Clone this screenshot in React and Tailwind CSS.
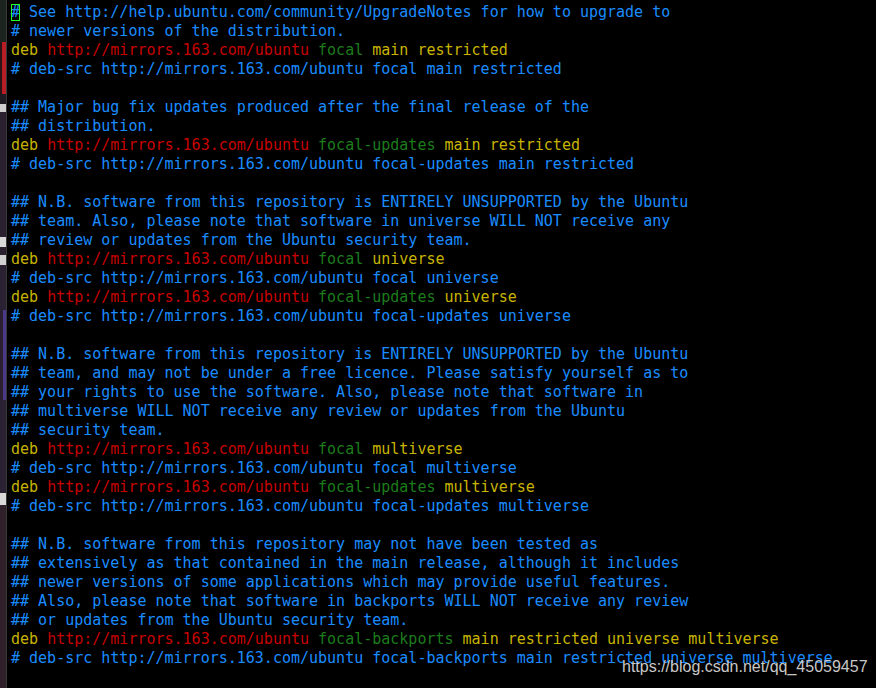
import React from "react";

const B = "text-[#1a8cff]";
const R = "text-[#c80000]";
const G = "text-[#1c7c1c]";
const Y = "text-[#c8b400]";

const deb = (suite, comps) => [
  [Y, "deb "],
  [R, "http://mirrors.163.com/ubuntu"],
  [B, " "],
  [G, suite],
  [B, " "],
  [Y, comps],
];
const c = (t) => [[B, t]];

const lines = [
  "CURSOR",
  c("# newer versions of the distribution."),
  deb("focal", "main restricted"),
  c("# deb-src http://mirrors.163.com/ubuntu focal main restricted"),
  c(""),
  c("## Major bug fix updates produced after the final release of the"),
  c("## distribution."),
  deb("focal-updates", "main restricted"),
  c("# deb-src http://mirrors.163.com/ubuntu focal-updates main restricted"),
  c(""),
  c("## N.B. software from this repository is ENTIRELY UNSUPPORTED by the Ubuntu"),
  c("## team. Also, please note that software in universe WILL NOT receive any"),
  c("## review or updates from the Ubuntu security team."),
  deb("focal", "universe"),
  c("# deb-src http://mirrors.163.com/ubuntu focal universe"),
  deb("focal-updates", "universe"),
  c("# deb-src http://mirrors.163.com/ubuntu focal-updates universe"),
  c(""),
  c("## N.B. software from this repository is ENTIRELY UNSUPPORTED by the Ubuntu"),
  c("## team, and may not be under a free licence. Please satisfy yourself as to"),
  c("## your rights to use the software. Also, please note that software in"),
  c("## multiverse WILL NOT receive any review or updates from the Ubuntu"),
  c("## security team."),
  deb("focal", "multiverse"),
  c("# deb-src http://mirrors.163.com/ubuntu focal multiverse"),
  deb("focal-updates", "multiverse"),
  c("# deb-src http://mirrors.163.com/ubuntu focal-updates multiverse"),
  c(""),
  c("## N.B. software from this repository may not have been tested as"),
  c("## extensively as that contained in the main release, although it includes"),
  c("## newer versions of some applications which may provide useful features."),
  c("## Also, please note that software in backports WILL NOT receive any review"),
  c("## or updates from the Ubuntu security team."),
  deb("focal-backports", "main restricted universe multiverse"),
  c("# deb-src http://mirrors.163.com/ubuntu focal-backports main restricted universe multiverse"),
];

function Line({ segs }) {
  if (segs === "CURSOR") {
    return (
      <div className="h-[19px] whitespace-pre">
        <span className="relative text-[#1a8cff]">
          <span className="absolute left-[0px] top-[1px] w-[9px] h-[17px] border border-[#22ff22] box-border"></span>
          #
        </span>
        <span className={B}> See http://help.ubuntu.com/community/UpgradeNotes for how to upgrade to</span>
      </div>
    );
  }
  return (
    <div className="h-[19px] whitespace-pre">
      {segs.map(([cls, t], i) => (
        <span key={i} className={cls}>
          {t}
        </span>
      ))}
      {segs.length === 1 && segs[0][1] === "" ? " " : null}
    </div>
  );
}

export default function App() {
  return (
    <div className="w-[876px] h-[688px] bg-black flex overflow-hidden relative">
      <div className="w-[7px] h-full flex flex-col bg-[#1a1620] border-r border-[#3a3a3a] shrink-0">
        <div className="h-[42px] bg-[#1c2420]"></div>
        <div className="h-[52px] bg-[#2a1418] flex justify-end">
          <div className="w-[4px] bg-[#b81c24]"></div>
        </div>
        <div className="h-[10px] bg-[#1e1a22]"></div>
        <div className="h-[8px] bg-[#cfcfcf]"></div>
        <div className="h-[125px] bg-[#2a2030]"></div>
        <div className="h-[10px] bg-[#d8d8d8]"></div>
        <div className="h-[8px] bg-[#2a2030]"></div>
        <div className="h-[10px] bg-[#d0d0d0]"></div>
        <div className="h-[45px] bg-[#2a2232]"></div>
        <div className="h-[90px] bg-[#2a2032] flex justify-end">
          <div className="w-[3px] bg-[#4a3a8a]"></div>
        </div>
        <div className="h-[93px] bg-[#2a2232]"></div>
        <div className="h-[12px] bg-[#d8d8d8]"></div>
        <div className="flex-1 bg-[#30202a]"></div>
      </div>
      <div
        className="flex-1 pt-[3px] pl-[4px] text-[15px] leading-[19px]"
        style={{ fontFamily: '"DejaVu Sans Mono", monospace' }}
      >
        {lines.map((l, i) => (
          <Line key={i} segs={l} />
        ))}
      </div>
      <div
        className="absolute left-[622px] top-[656px] text-[16px] leading-[22px] text-[#c8c8c8] whitespace-nowrap"
        style={{ fontFamily: '"Liberation Sans", Arial, sans-serif' }}
      >
        https://blog.csdn.net/qq_45059457
      </div>
    </div>
  );
}
